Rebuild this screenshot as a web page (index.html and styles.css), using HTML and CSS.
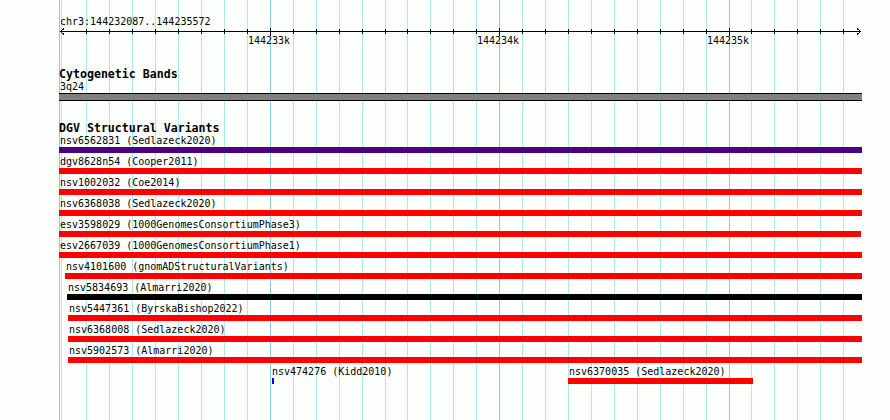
FILE: index.html
```html
<!DOCTYPE html>
<html lang="en">
<head>
  <meta charset="UTF-8" />
  <title>chr3:144232087..144235572</title>
  <link rel="stylesheet" href="styles.css">
</head>
<body>
  <div class="view">
    <!-- gridlines every 100bp, major every 1kb -->
    <div class="grid">
      <div class="vline major" style="left:59px"></div>
      <div class="vline" style="left:61px"></div>
      <div class="vline" style="left:86px"></div>
      <div class="vline" style="left:109px"></div>
      <div class="vline" style="left:132px"></div>
      <div class="vline" style="left:155px"></div>
      <div class="vline" style="left:178px"></div>
      <div class="vline" style="left:201px"></div>
      <div class="vline" style="left:224px"></div>
      <div class="vline" style="left:247px"></div>
      <div class="vline major" style="left:270px"></div>
      <div class="vline" style="left:293px"></div>
      <div class="vline" style="left:316px"></div>
      <div class="vline" style="left:339px"></div>
      <div class="vline" style="left:362px"></div>
      <div class="vline" style="left:385px"></div>
      <div class="vline" style="left:407px"></div>
      <div class="vline" style="left:430px"></div>
      <div class="vline" style="left:453px"></div>
      <div class="vline" style="left:476px"></div>
      <div class="vline major" style="left:499px"></div>
      <div class="vline" style="left:522px"></div>
      <div class="vline" style="left:545px"></div>
      <div class="vline" style="left:568px"></div>
      <div class="vline" style="left:591px"></div>
      <div class="vline" style="left:614px"></div>
      <div class="vline" style="left:637px"></div>
      <div class="vline" style="left:660px"></div>
      <div class="vline" style="left:683px"></div>
      <div class="vline" style="left:706px"></div>
      <div class="vline major" style="left:729px"></div>
      <div class="vline" style="left:751px"></div>
      <div class="vline" style="left:774px"></div>
      <div class="vline" style="left:797px"></div>
      <div class="vline" style="left:820px"></div>
      <div class="vline" style="left:843px"></div>
    </div>

    <div class="content">
      <div class="ruler">
        <div class="locus">chr3:144232087..144235572</div>
        <svg class="scale" width="890" height="10" viewBox="0 0 890 10">
          <path d="M60 3.5H861" stroke="#000" fill="none" />
          <path d="M64 0.5L60.5 3.5L64 6.5M857 0.5L860.5 3.5L857 6.5" stroke="#000" fill="none" />
          <path stroke="#000" fill="none" d="M86.5 1V6M109.5 1V6M132.5 1V6M155.5 1V6M178.5 1V6M201.5 1V6M224.5 1V6M247.5 1V6M270.5 0V8M293.5 1V6M316.5 1V6M339.5 1V6M362.5 1V6M385.5 1V6M407.5 1V6M430.5 1V6M453.5 1V6M476.5 1V6M499.5 0V8M522.5 1V6M545.5 1V6M568.5 1V6M591.5 1V6M614.5 1V6M637.5 1V6M660.5 1V6M683.5 1V6M706.5 1V6M729.5 0V8M751.5 1V6M774.5 1V6M797.5 1V6M820.5 1V6M843.5 1V6" />
        </svg>
        <span class="scale-label" style="left:248px">144233k</span>
        <span class="scale-label" style="left:477px">144234k</span>
        <span class="scale-label" style="left:707px">144235k</span>
      </div>

      <div class="track">
        <div class="track-title">Cytogenetic Bands</div>
        <div class="band-label">3q24</div>
        <div class="band"></div>
      </div>

      <div class="track dgv">
        <div class="track-title">DGV Structural Variants</div>

        <div class="feature-row">
          <div class="feature" style="left:59px">
            <div class="feature-label">nsv6562831 (Sedlazeck2020)</div>
            <div class="feature-bar purple" style="width:803px"></div>
          </div>
        </div>
        <div class="feature-row">
          <div class="feature" style="left:59px">
            <div class="feature-label">dgv8628n54 (Cooper2011)</div>
            <div class="feature-bar" style="width:803px"></div>
          </div>
        </div>
        <div class="feature-row">
          <div class="feature" style="left:59px">
            <div class="feature-label">nsv1002032 (Coe2014)</div>
            <div class="feature-bar" style="width:803px"></div>
          </div>
        </div>
        <div class="feature-row">
          <div class="feature" style="left:59px">
            <div class="feature-label">nsv6368038 (Sedlazeck2020)</div>
            <div class="feature-bar" style="width:803px"></div>
          </div>
        </div>
        <div class="feature-row">
          <div class="feature" style="left:59px">
            <div class="feature-label">esv3598029 (1000GenomesConsortiumPhase3)</div>
            <div class="feature-bar" style="width:802px"></div>
          </div>
        </div>
        <div class="feature-row">
          <div class="feature" style="left:59px">
            <div class="feature-label">esv2667039 (1000GenomesConsortiumPhase1)</div>
            <div class="feature-bar" style="width:803px"></div>
          </div>
        </div>
        <div class="feature-row">
          <div class="feature" style="left:65px">
            <div class="feature-label">nsv4101600 (gnomADStructuralVariants)</div>
            <div class="feature-bar" style="width:797px"></div>
          </div>
        </div>
        <div class="feature-row">
          <div class="feature" style="left:67px">
            <div class="feature-label">nsv5834693 (Almarri2020)</div>
            <div class="feature-bar black" style="width:795px"></div>
          </div>
        </div>
        <div class="feature-row">
          <div class="feature" style="left:68px">
            <div class="feature-label">nsv5447361 (ByrskaBishop2022)</div>
            <div class="feature-bar" style="width:794px"></div>
          </div>
        </div>
        <div class="feature-row">
          <div class="feature" style="left:68px">
            <div class="feature-label">nsv6368008 (Sedlazeck2020)</div>
            <div class="feature-bar" style="width:794px"></div>
          </div>
        </div>
        <div class="feature-row">
          <div class="feature" style="left:68px">
            <div class="feature-label">nsv5902573 (Almarri2020)</div>
            <div class="feature-bar" style="width:794px"></div>
          </div>
        </div>
        <div class="feature-row">
          <div class="feature" style="left:271px">
            <div class="feature-label">nsv474276 (Kidd2010)</div>
            <div class="feature-bar blue" style="width:2px;margin-left:1px"></div>
          </div>
          <div class="feature" style="left:568px">
            <div class="feature-label">nsv6370035 (Sedlazeck2020)</div>
            <div class="feature-bar" style="width:185px"></div>
          </div>
        </div>
      </div>
    </div>
  </div>
</body>
</html>
```

FILE: styles.css
```css
body {
  margin: 0;
  background: #fcfffc;
  font-family: "DejaVu Sans Mono", monospace;
  font-size: 10px;
  color: #000;
}
.view {
  position: relative;
  width: 890px;
  height: 420px;
  overflow: hidden;
}
.grid {
  position: absolute;
  top: 0;
  left: 0;
  right: 0;
  bottom: 0;
}
.vline {
  position: absolute;
  top: 0;
  bottom: 0;
  width: 1px;
  background: #aee8ee;
}
.vline.major {
  background: #8ccbe6;
}
.content {
  position: relative;
}
.ruler {
  position: relative;
  height: 67px;
}
.locus {
  padding: 16px 0 0 60px;
  line-height: 12px;
}
.scale {
  display: block;
  shape-rendering: crispEdges;
}
.scale-label {
  position: absolute;
  top: 35px;
  line-height: 12px;
}
.track-title {
  padding-left: 59px;
  font-weight: bold;
  font-size: 11.6px;
  line-height: 14px;
}
.band-label {
  padding-left: 60px;
  line-height: 12px;
}
.band {
  margin-left: 59px;
  width: 803px;
  height: 6px;
  background: #808080;
  border-top: 1px solid #000;
  border-bottom: 1px solid #000;
}
.dgv {
  margin-top: 20px;
}
.feature-row {
  position: relative;
  height: 21px;
}
.feature {
  position: absolute;
  top: 0;
}
.feature-label {
  line-height: 12px;
  white-space: nowrap;
  padding-left: 1px;
}
.feature-bar {
  height: 6px;
  background: #f00;
}
.feature-bar.purple {
  background: #4b0082;
}
.feature-bar.black {
  background: #000;
}
.feature-bar.blue {
  background: #00f;
}
```
